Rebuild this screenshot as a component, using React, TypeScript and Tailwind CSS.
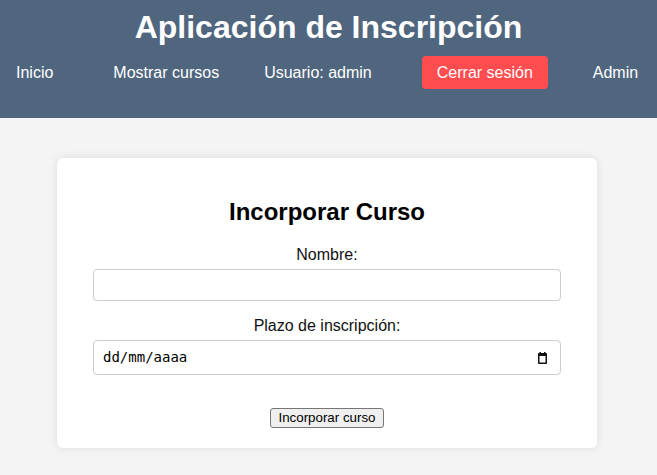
import React from "react";

export default function App() {
  return (
    <div className="min-h-[475px] bg-[#f4f4f4] font-['Liberation_Sans',Arial,sans-serif]">
      <header className="bg-[#50667f] pt-[9px] h-[118px] text-white">
        <h1 className="text-center text-[32px] font-bold leading-[37px]">Aplicación de Inscripción</h1>
        <nav className="mt-[10px] flex items-center pl-[16px] text-[16px] leading-[18px]">
          <a className="text-white">Inicio</a>
          <a className="ml-[60px] text-white">Mostrar cursos</a>
          <span className="ml-[45px]">Usuario: admin</span>
          <button className="ml-[50px] h-[33px] rounded-[4px] bg-[#ff4d4f] px-[15px] text-[16px] text-white">Cerrar sesión</button>
          <a className="ml-[45px] text-white">Admin</a>
        </nav>
      </header>
      <main className="pt-[40px] pb-[27px]">
        <div className="ml-[57px] w-[540px] rounded-[6px] bg-white px-[36px] pt-[40px] pb-[20px] shadow-[0_0_10px_rgba(0,0,0,0.1)]">
          <h2 className="text-center text-[24px] font-bold leading-[28px] text-black">Incorporar Curso</h2>
          <form className="mt-[20px] flex flex-col">
            <label className="text-center text-[16px] leading-[18px] text-[#111]">Nombre:</label>
            <input type="text" className="mt-[5px] h-[32px] w-full rounded-[4px] border border-[#cccccc] bg-white px-[6px] text-[13.33px] outline-none" />
            <label className="mt-[16px] text-center text-[16px] leading-[18px] text-[#111]">Plazo de inscripción:</label>
            <div className="mt-[5px] flex h-[35px] w-full items-center justify-between rounded-[4px] border border-[#cccccc] bg-white pl-[9px] pr-[13px]">
              <span className="font-['DejaVu_Sans_Mono',monospace] text-[14px] text-black">dd/mm/aaaa</span>
              <svg width="9" height="12" viewBox="0 0 9 12">
                <rect x="0" y="1" width="9" height="11" rx="1" fill="#111" />
                <rect x="1.5" y="4" width="6" height="6.5" fill="#fff" />
                <rect x="1.5" y="0" width="1.5" height="2" fill="#111" />
                <rect x="6" y="0" width="1.5" height="2" fill="#111" />
              </svg>
            </div>
            <div className="mt-[33px] flex justify-center">
              <button type="button" className="h-[20px] rounded-[3px] border border-[#767676] bg-[#efefef] px-[7px] text-[13.33px] leading-[16px] text-black">Incorporar curso</button>
            </div>
          </form>
        </div>
      </main>
    </div>
  );
}
